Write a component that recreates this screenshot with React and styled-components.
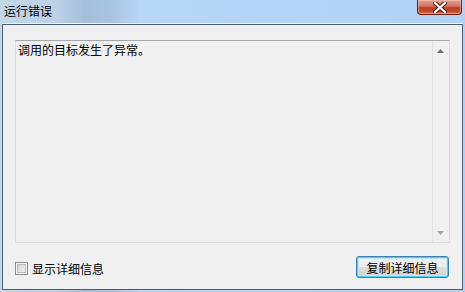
import React from 'react';
import styled, { createGlobalStyle } from 'styled-components';

const Global = createGlobalStyle`
  html, body {
    margin: 0;
    padding: 0;
    background: #ffffff;
  }
  body {
    font-family: "Noto Sans CJK SC", "Liberation Sans", sans-serif;
    font-size: 12px;
  }
`

const Window = styled.div`
  width: 465px;
  height: 292px;
  box-sizing: border-box;
  padding: 0 2px 2px 2px;
  display: flex;
  flex-direction: column;
  background: linear-gradient(90deg, #c3d6ea 0%, #bcd2e8 12%, #a6c0dc 18%, #a9c4e0 24%, #b8d6f5 30%, #b4d4f5 60%, #b2d2f4 100%);
`

const TitleBar = styled.div`
  height: 24px;
  flex: none;
  display: flex;
  align-items: flex-start;
  justify-content: space-between;
  border-bottom: 1px solid #eef4fb;
  box-sizing: border-box;
`

const Title = styled.div`
  padding: 3px 0 0 2px;
  font-size: 12px;
  line-height: 16px;
  color: #000;
`

const CloseButton = styled.div`
  width: 45px;
  height: 15px;
  margin-right: 1px;
  box-sizing: border-box;
  border: 1px solid #6b1e15;
  border-top: none;
  border-radius: 0 0 4px 4px;
  background: linear-gradient(180deg, #e3a394 0%, #d27260 45%, #c13d25 55%, #c54b30 85%, #e07a55 100%);
  box-shadow: inset 0 0 0 1px rgba(255, 210, 200, 0.45);
  display: flex;
  align-items: center;
  justify-content: center;
`

const Client = styled.div`
  flex: 1;
  border: 1px solid #4c5e74;
  background: #f0f0f0;
  padding: 15px 12px 0 12px;
  display: flex;
  flex-direction: column;
`

const TextBox = styled.div`
  height: 203px;
  box-sizing: border-box;
  border: 1px solid #dadbde;
  border-top-color: #a5a7ac;
  display: flex;
  background: #f0f0f0;
`

const TextArea = styled.div`
  flex: 1;
  padding: 1px 0 0 2px;
  font-size: 12px;
  line-height: 16px;
  color: #000;
`

const ScrollBar = styled.div`
  width: 15px;
  border-left: 1px solid #e3e3e3;
  margin: 0 1px 0 0;
  display: flex;
  flex-direction: column;
  justify-content: space-between;
  align-items: center;
  padding: 8px 0 7px;
  background: #f0f0f0;
`

const Footer = styled.div`
  display: flex;
  align-items: center;
  justify-content: space-between;
  padding: 13px 1px 0 0;
`

const CheckLabel = styled.label`
  display: flex;
  align-items: center;
  gap: 4px;
  padding-top: 2px;
  font-size: 12px;
  color: #000;
`

const CheckBox = styled.span`
  width: 13px;
  height: 13px;
  box-sizing: border-box;
  border: 1px solid #8e8f8f;
  background: linear-gradient(135deg, #cbcbcb 0%, #e6e6e6 55%, #f7f7f7 100%);
  box-shadow: inset 0 0 0 1px #f4f4f4, inset 0 0 0 2px #bdbdbd;
`

const Button = styled.button`
  width: 93px;
  height: 22px;
  box-sizing: border-box;
  border: 1px solid #3c7fb1;
  border-radius: 3px;
  padding: 0;
  font-family: "Noto Sans CJK SC", "Liberation Sans", sans-serif;
  font-size: 12px;
  color: #000;
  background: linear-gradient(180deg, #f3f3f3 0%, #ececec 48%, #dedede 52%, #d0d0d0 100%);
  box-shadow: inset 0 0 0 1px #48cff8, inset 0 0 0 2px #bfeaf9;
`

const Arrow = ({ up }) => (
  <svg width="7" height="4" viewBox="0 0 7 4">
    <path d={up ? 'M0 4 L3.5 0 L7 4 Z' : 'M0 0 L3.5 4 L7 0 Z'} fill={up ? '#6e6e6e' : '#a6a6a6'} />
  </svg>
);

const CloseGlyph = () => (
  <svg width="14" height="11" viewBox="0 0 14 11">
    <path d="M2 1 L12 10 M12 1 L2 10" stroke="#4a1a12" strokeWidth="4" strokeLinecap="square" />
    <path d="M2 1 L12 10 M12 1 L2 10" stroke="#ffffff" strokeWidth="2.2" strokeLinecap="square" />
  </svg>
);

export default function App() {
  return (
    <>
      <Global />
      <Window>
        <TitleBar>
          <Title>运行错误</Title>
          <CloseButton><CloseGlyph /></CloseButton>
        </TitleBar>
        <Client>
          <TextBox>
            <TextArea>调用的目标发生了异常。</TextArea>
            <ScrollBar>
              <Arrow up />
              <Arrow />
            </ScrollBar>
          </TextBox>
          <Footer>
            <CheckLabel>
              <CheckBox />
              显示详细信息
            </CheckLabel>
            <Button>复制详细信息</Button>
          </Footer>
        </Client>
      </Window>
    </>
  );
}
